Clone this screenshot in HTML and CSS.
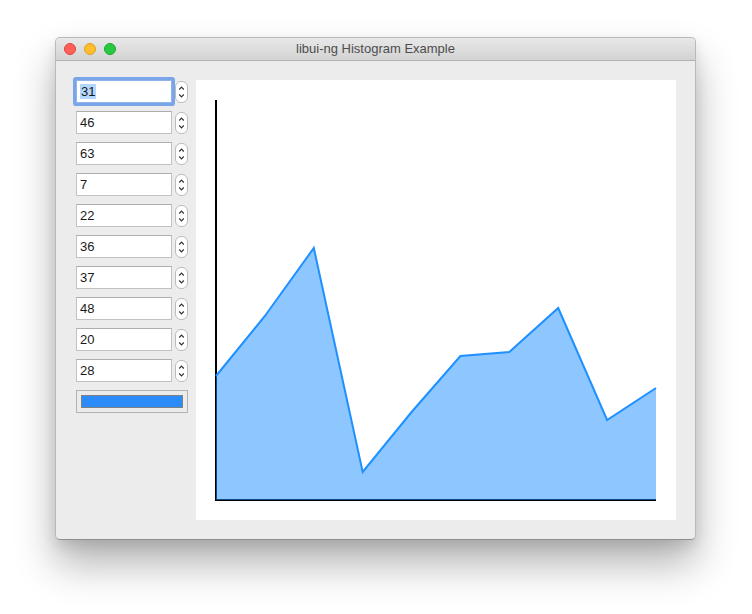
FILE: index.html
```html
<!DOCTYPE html>
<html>
<head>
<meta charset="utf-8">
<link rel="stylesheet" href="styles.css">
</head>
<body>
<div class="window">
  <div class="titlebar">
    <div class="lights">
      <span class="light red"></span>
      <span class="light yellow"></span>
      <span class="light green"></span>
    </div>
    <div class="title">libui-ng Histogram Example</div>
  </div>
  <div class="content">
    <div class="controls">
      <div class="spin focused"><div class="field"><span class="sel">31</span></div><div class="stepper"><svg width="13" height="22" viewBox="0 0 13 22"><path d="M4.2 8.5 L6.5 6.2 L8.8 8.5 M4.2 13.5 L6.5 15.8 L8.8 13.5" fill="none" stroke="#333" stroke-width="1.2"/></svg></div></div>
      <div class="spin"><div class="field">46</div><div class="stepper"><svg width="13" height="22" viewBox="0 0 13 22"><path d="M4.2 8.5 L6.5 6.2 L8.8 8.5 M4.2 13.5 L6.5 15.8 L8.8 13.5" fill="none" stroke="#333" stroke-width="1.2"/></svg></div></div>
      <div class="spin"><div class="field">63</div><div class="stepper"><svg width="13" height="22" viewBox="0 0 13 22"><path d="M4.2 8.5 L6.5 6.2 L8.8 8.5 M4.2 13.5 L6.5 15.8 L8.8 13.5" fill="none" stroke="#333" stroke-width="1.2"/></svg></div></div>
      <div class="spin"><div class="field">7</div><div class="stepper"><svg width="13" height="22" viewBox="0 0 13 22"><path d="M4.2 8.5 L6.5 6.2 L8.8 8.5 M4.2 13.5 L6.5 15.8 L8.8 13.5" fill="none" stroke="#333" stroke-width="1.2"/></svg></div></div>
      <div class="spin"><div class="field">22</div><div class="stepper"><svg width="13" height="22" viewBox="0 0 13 22"><path d="M4.2 8.5 L6.5 6.2 L8.8 8.5 M4.2 13.5 L6.5 15.8 L8.8 13.5" fill="none" stroke="#333" stroke-width="1.2"/></svg></div></div>
      <div class="spin"><div class="field">36</div><div class="stepper"><svg width="13" height="22" viewBox="0 0 13 22"><path d="M4.2 8.5 L6.5 6.2 L8.8 8.5 M4.2 13.5 L6.5 15.8 L8.8 13.5" fill="none" stroke="#333" stroke-width="1.2"/></svg></div></div>
      <div class="spin"><div class="field">37</div><div class="stepper"><svg width="13" height="22" viewBox="0 0 13 22"><path d="M4.2 8.5 L6.5 6.2 L8.8 8.5 M4.2 13.5 L6.5 15.8 L8.8 13.5" fill="none" stroke="#333" stroke-width="1.2"/></svg></div></div>
      <div class="spin"><div class="field">48</div><div class="stepper"><svg width="13" height="22" viewBox="0 0 13 22"><path d="M4.2 8.5 L6.5 6.2 L8.8 8.5 M4.2 13.5 L6.5 15.8 L8.8 13.5" fill="none" stroke="#333" stroke-width="1.2"/></svg></div></div>
      <div class="spin"><div class="field">20</div><div class="stepper"><svg width="13" height="22" viewBox="0 0 13 22"><path d="M4.2 8.5 L6.5 6.2 L8.8 8.5 M4.2 13.5 L6.5 15.8 L8.8 13.5" fill="none" stroke="#333" stroke-width="1.2"/></svg></div></div>
      <div class="spin"><div class="field">28</div><div class="stepper"><svg width="13" height="22" viewBox="0 0 13 22"><path d="M4.2 8.5 L6.5 6.2 L8.8 8.5 M4.2 13.5 L6.5 15.8 L8.8 13.5" fill="none" stroke="#333" stroke-width="1.2"/></svg></div></div>
      <div class="colorbtn"><div class="swatch"></div></div>
    </div>
    <div class="canvas">
      <svg width="480" height="440" viewBox="0 0 480 440">
        <path d="M20 20 L20 420 L460 420" fill="none" stroke="#000" stroke-width="2"/>
        <path d="M20 296 L68.9 236 L117.8 168 L166.7 392 L215.6 332 L264.4 276 L313.3 272 L362.2 228 L411.1 340 L460 308 L460 420 L20 420 Z" fill="#1e90ff" fill-opacity="0.5"/>
        <path d="M20 296 L68.9 236 L117.8 168 L166.7 392 L215.6 332 L264.4 276 L313.3 272 L362.2 228 L411.1 340 L460 308" fill="none" stroke="#1e90ff" stroke-width="2"/>
      </svg>
    </div>
  </div>
</div>
</body>
</html>
```
FILE: styles.css
```css
html, body {
  margin: 0;
  padding: 0;
  background: #ffffff;
}
body {
  box-sizing: border-box;
  min-height: 614px;
  padding: 37px 0 0 55px;
  font-family: "Liberation Sans", Arial, sans-serif;
}
.window {
  width: 641px;
  box-sizing: border-box;
  border: 1px solid #b9b9b9;
  border-bottom-color: #8e8e8e;
  border-radius: 5px;
  overflow: hidden;
  background: #ececec;
  box-shadow: 0 24px 40px rgba(0, 0, 0, 0.3), 0 6px 14px rgba(0, 0, 0, 0.1);
}
.titlebar {
  height: 22px;
  display: flex;
  align-items: center;
  justify-content: center;
  background: linear-gradient(#e8e8e8, #d3d3d3);
  border-bottom: 1px solid #b2b2b2;
  position: relative;
}
.lights {
  position: absolute;
  left: 8px;
  top: 5px;
  display: flex;
  gap: 8px;
}
.light {
  width: 12px;
  height: 12px;
  border-radius: 50%;
  box-sizing: border-box;
}
.red { background: #fe5f57; border: 1px solid #e0443e; }
.yellow { background: #febc2e; border: 1px solid #dea123; }
.green { background: #28c840; border: 1px solid #1aab29; }
.title {
  font-size: 13px;
  color: #4d4d4d;
  line-height: 22px;
}
.content {
  display: flex;
  gap: 8px;
  padding: 19px 19px 19px 20px;
}
.controls {
  width: 112px;
  display: flex;
  flex-direction: column;
  gap: 8px;
}
.spin {
  display: flex;
  align-items: center;
  gap: 3px;
  height: 23px;
}
.field {
  width: 96px;
  height: 23px;
  box-sizing: border-box;
  background: #fff;
  border: 1px solid #c2c2c2;
  border-top-color: #aeaeae;
  font-size: 13px;
  line-height: 21px;
  padding-left: 3px;
  color: #1a1a1a;
}
.focused .field {
  border-color: #8fb4ec;
  box-shadow: 0 0 0 3px #7aa5e8;
  border-radius: 1px;
}
.sel {
  background: #b3d7ff;
  padding: 0 1px;
}
.stepper {
  width: 13px;
  height: 22px;
  box-sizing: border-box;
  border: 1px solid #bcbcbc;
  border-radius: 6px;
  background: #fff;
  display: flex;
  align-items: center;
  justify-content: center;
}
.stepper svg {
  display: block;
  margin: -1px;
}
.colorbtn {
  width: 112px;
  height: 23px;
  box-sizing: border-box;
  border: 1px solid #b3b3b3;
  background: #ebebeb;
  padding: 4px;
}
.swatch {
  height: 13px;
  box-sizing: border-box;
  background: #2b8bf8;
  border: 1px solid #808080;
}
.canvas {
  width: 480px;
  height: 440px;
  background: #fff;
}
.canvas svg {
  display: block;
}
```
